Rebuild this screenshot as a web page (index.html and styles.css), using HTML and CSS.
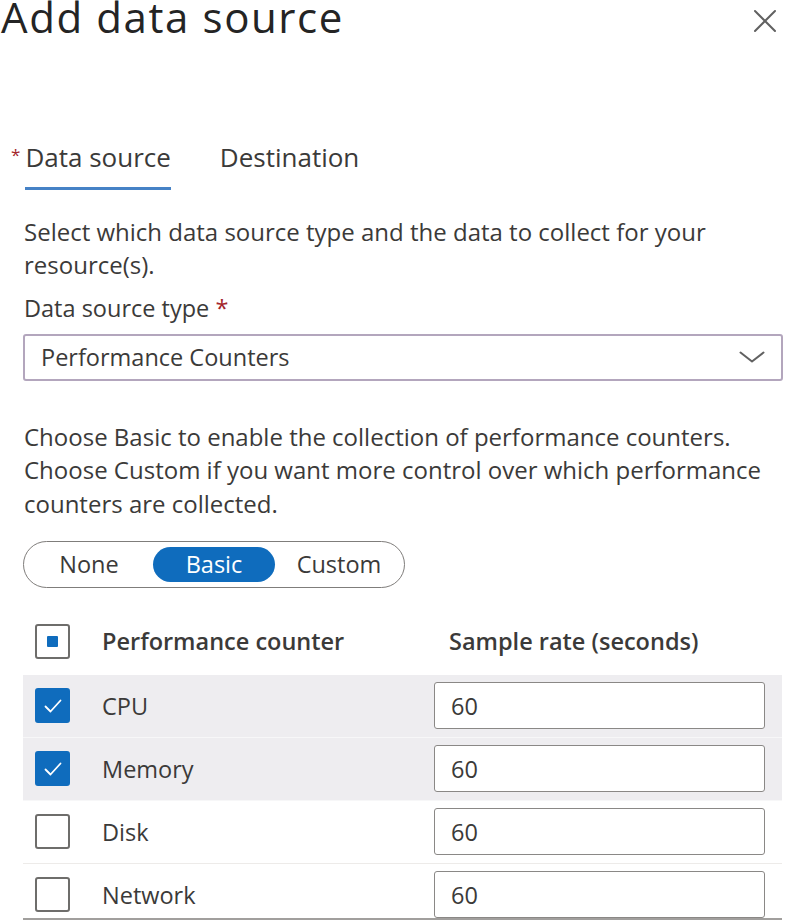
FILE: index.html
```html
<!DOCTYPE html>
<html lang="en">
<head>
<meta charset="utf-8">
<title>Add data source</title>
<link rel="stylesheet" href="styles.css">
</head>
<body>
<div class="panel">
  <header class="header">
    <h1 class="title">Add data source</h1>
    <button class="close" aria-label="Close">
      <svg width="24" height="24" viewBox="0 0 24 24"><path d="M2 2 L22 22 M22 2 L2 22" stroke="#616161" stroke-width="2" fill="none" stroke-linecap="round"/></svg>
    </button>
  </header>

  <nav class="tabs">
    <div class="tab active"><span class="req-tab">*</span><span class="tab-label">Data source</span></div>
    <div class="tab"><span class="tab-label">Destination</span></div>
  </nav>

  <section class="content">
    <p class="desc">Select which data source type and the data to collect for your resource(s).</p>
    <label class="field-label">Data source type <span class="req">*</span></label>
    <div class="dropdown">
      <span>Performance Counters</span>
      <svg class="chev" width="26" height="12" viewBox="0 0 26 12"><path d="M1.5 1.5 L13 10.5 L24.5 1.5" stroke="#616161" stroke-width="2" fill="none" stroke-linecap="round" stroke-linejoin="round"/></svg>
    </div>

    <p class="desc desc2">Choose Basic to enable the collection of performance counters. Choose Custom if you want more control over which performance counters are collected.</p>

    <div class="toggle">
      <span class="seg">None</span>
      <span class="seg selected">Basic</span>
      <span class="seg">Custom</span>
    </div>

    <div class="table">
      <div class="row head">
        <span class="cb partial"><span class="dot"></span></span>
        <span class="th">Performance counter</span>
        <span class="th th-rate">Sample rate (seconds)</span>
      </div>
      <div class="row sel">
        <span class="cb checked"><svg width="22" height="22" viewBox="0 0 22 22"><path d="M3.5 11.5 L8.5 16.5 L18.5 5.5" stroke="#fff" stroke-width="1.8" fill="none" stroke-linecap="round" stroke-linejoin="round"/></svg></span>
        <span class="name">CPU</span>
        <div class="input">60</div>
      </div>
      <div class="row sel">
        <span class="cb checked"><svg width="22" height="22" viewBox="0 0 22 22"><path d="M3.5 11.5 L8.5 16.5 L18.5 5.5" stroke="#fff" stroke-width="1.8" fill="none" stroke-linecap="round" stroke-linejoin="round"/></svg></span>
        <span class="name">Memory</span>
        <div class="input">60</div>
      </div>
      <div class="row">
        <span class="cb"></span>
        <span class="name">Disk</span>
        <div class="input">60</div>
      </div>
      <div class="row last">
        <span class="cb"></span>
        <span class="name">Network</span>
        <div class="input">60</div>
      </div>
    </div>
  </section>
</div>
</body>
</html>
```

FILE: styles.css
```css
* { box-sizing: border-box; }
html, body { margin: 0; padding: 0; background: #fff; }
body {
  font-family: "Open Sans", "Noto Sans", sans-serif;
  color: #3b3a39;
  width: 786px;
  height: 920px;
  overflow: hidden;
}
.panel { width: 786px; }

.header {
  display: flex;
  justify-content: space-between;
  align-items: flex-start;
  padding-left: 1px;
}
.title {
  margin: 0;
  font-size: 42px;
  line-height: 32px;
  padding-top: 1px;
  font-weight: 400;
  letter-spacing: 1.6px;
  color: #242424;
  white-space: nowrap;
}
.close {
  margin: 9px 9px 0 0;
  padding: 0;
  border: 0;
  background: transparent;
  width: 24px;
  height: 24px;
  display: block;
}
.close svg { display: block; }

.tabs {
  display: flex;
  gap: 49px;
  margin-top: 108px;
  padding-left: 11px;
}
.tab {
  display: flex;
  align-items: flex-start;
  font-size: 26px;
  line-height: 32px;
  color: #3b3a39;
}
.req-tab {
  color: #a4262c;
  font-size: 17px;
  line-height: 20px;
  margin-right: 5px;
  margin-top: 4px;
}
.tab-label {
  padding-bottom: 14px;
  border-bottom: 3px solid transparent;
}
.tab.active .tab-label { border-bottom-color: #4682c6; }

.content { padding-left: 24px; padding-right: 3px; }

.desc {
  margin: 25px 0 0;
  font-size: 24px;
  line-height: 33px;
  color: #3b3a39;
}
.field-label {
  display: block;
  margin-top: 11px;
  font-size: 23.5px;
  line-height: 33px;
}
.req { color: #a4262c; }

.dropdown {
  margin-top: 8.5px;
  margin-left: -1px;
  height: 47px;
  border: 2px solid #b3a6bd;
  border-radius: 3px;
  display: flex;
  align-items: center;
  justify-content: space-between;
  padding: 0 16px;
  font-size: 23.5px;
  line-height: 33px;
}
.chev { display: block; }

.desc2 { margin-top: 39px; line-height: 33.5px; }

.toggle {
  margin-top: 20.5px;
  margin-left: -1px;
  width: 382px;
  height: 47px;
  border: 1.5px solid #7f7d7b;
  border-radius: 24px;
  display: flex;
  align-items: center;
  padding: 0 4px;
  gap: 3px;
  font-size: 23.5px;
}
.seg {
  width: 122px;
  height: 35px;
  line-height: 35px;
  text-align: center;
  border-radius: 18px;
  color: #3b3a39;
}
.seg.selected { background: #0f6cbd; color: #fff; }

.table {
  margin-top: 20px;
  margin-left: -1px;
  width: 759px;
  height: 312px;
  overflow: hidden;
  border-bottom: 2px solid #a19f9d;
}
.row {
  display: grid;
  grid-template-columns: 35px 300px 331px;
  column-gap: 32px;
  align-items: center;
  padding: 0 16px 0 12px;
  height: 63px;
  border-bottom: 1px solid #edebe9;
  font-size: 23.5px;
}
.row.head { height: 67px; border-bottom: 0; }
.row.sel { background: #eeedf0; border-bottom-color: #f7f7f8; }
.th { font-weight: 600; color: #3b3a39; white-space: nowrap; }
.th-rate { padding-left: 15px; }
.name { color: #3b3a39; }

.cb {
  width: 35px;
  height: 35px;
  border: 2px solid #6e6d6b;
  border-radius: 3px;
  display: flex;
  align-items: center;
  justify-content: center;
  background: #fff;
}
.cb.checked { background: #0f6cbd; border-color: #0f6cbd; }
.cb .dot { width: 11px; height: 11px; background: #0f6cbd; border-radius: 1px; }
.cb svg { display: block; }

.input {
  height: 47px;
  border: 1.5px solid #8a8886;
  border-radius: 3px;
  background: #fff;
  padding-left: 16px;
  display: flex;
  align-items: center;
  color: #3b3a39;
}
```
